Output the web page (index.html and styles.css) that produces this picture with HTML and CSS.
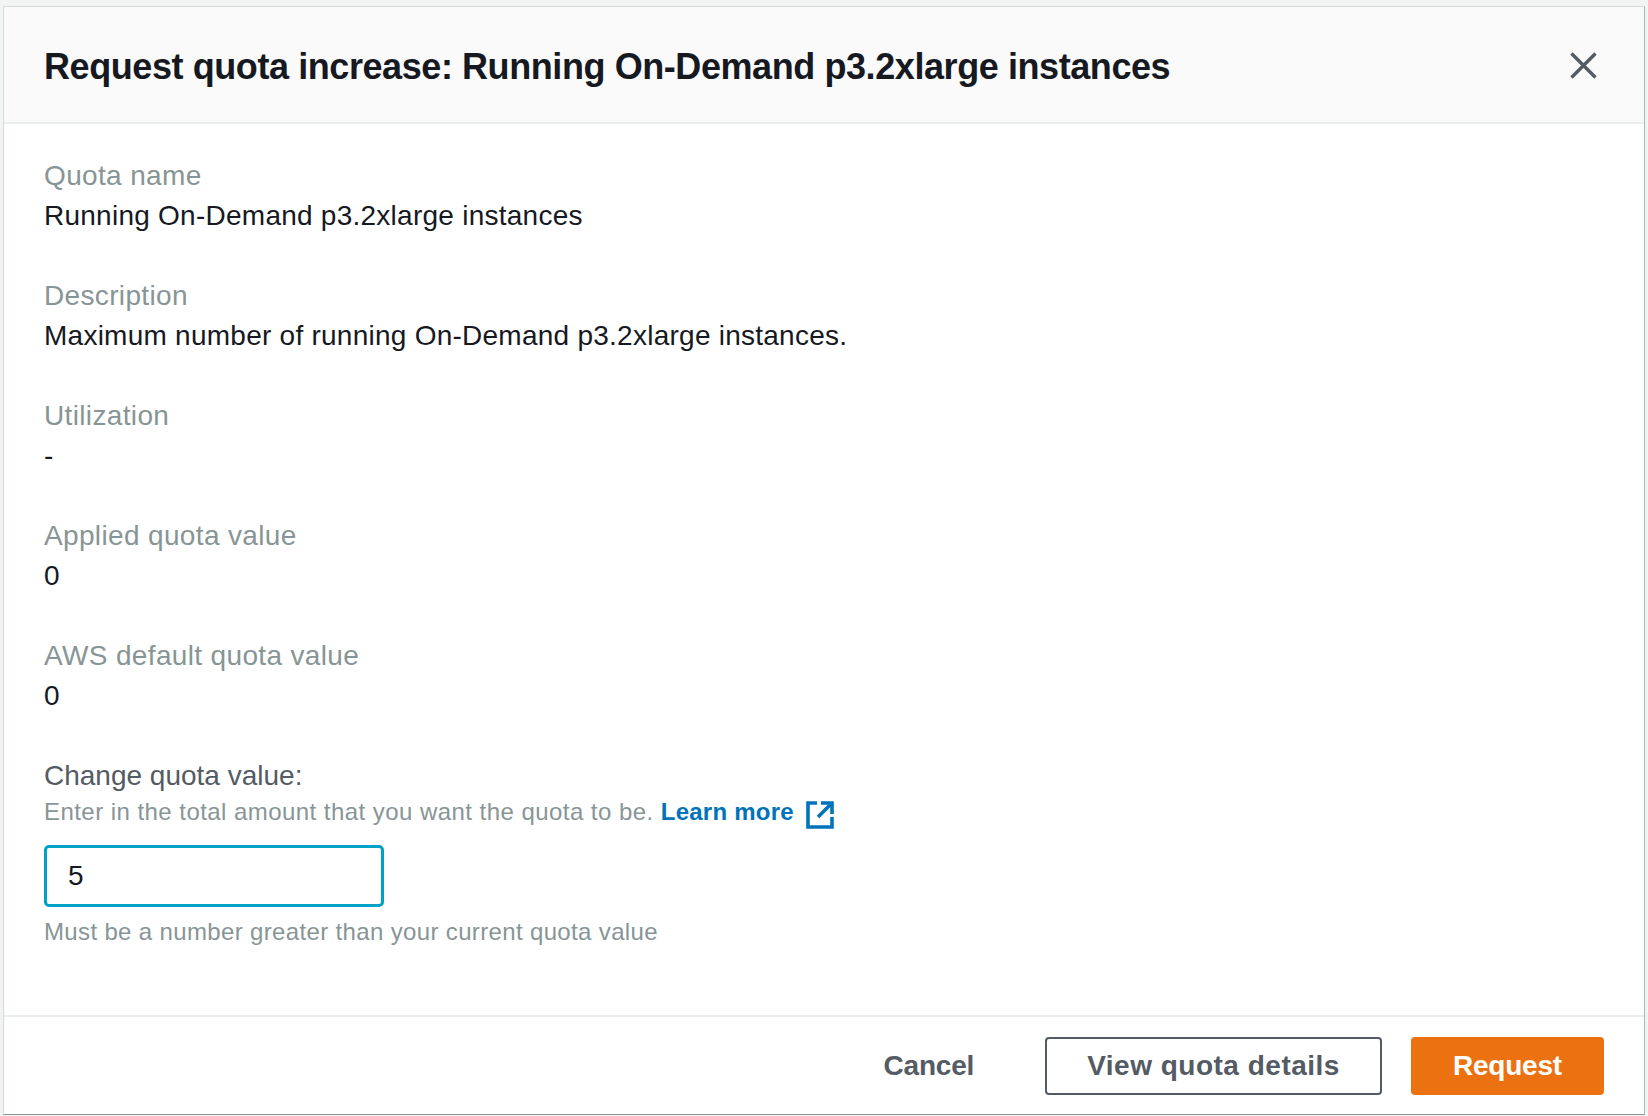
FILE: index.html
```html
<!DOCTYPE html>
<html lang="en">
<head>
<meta charset="utf-8">
<title>Request quota increase</title>
<link rel="stylesheet" href="styles.css">
</head>
<body>
<div class="page">
  <div class="modal">
    <header class="modal-header">
      <h2 class="modal-title">Request quota increase: Running On-Demand p3.2xlarge instances</h2>
      <button class="close-btn" aria-label="Close">
        <svg viewBox="0 0 27 27" width="27" height="27"><path d="M1.5 1.5L25.5 25.5M25.5 1.5L1.5 25.5" stroke="#545b64" stroke-width="3.4" fill="none"/></svg>
      </button>
    </header>
    <div class="modal-body">
      <div class="field">
        <div class="label">Quota name</div>
        <div class="value">Running On-Demand p3.2xlarge instances</div>
      </div>
      <div class="field">
        <div class="label">Description</div>
        <div class="value">Maximum number of running On-Demand p3.2xlarge instances.</div>
      </div>
      <div class="field">
        <div class="label">Utilization</div>
        <div class="value">-</div>
      </div>
      <div class="field">
        <div class="label">Applied quota value</div>
        <div class="value">0</div>
      </div>
      <div class="field">
        <div class="label">AWS default quota value</div>
        <div class="value">0</div>
      </div>
      <div class="form-field">
        <label class="input-label" for="quota">Change quota value:</label>
        <div class="input-desc">Enter in the total amount that you want the quota to be. <a class="link" href="#">Learn more<svg class="ext-icon" viewBox="0 0 28 28" width="28" height="28"><path d="M11 2H2V26H26V16M15 2H26V13M26 2L12 16" stroke="#0073bb" stroke-width="3.6" fill="none"/></svg></a></div>
        <input class="quota-input" id="quota" type="text" value="5">
        <div class="constraint">Must be a number greater than your current quota value</div>
      </div>
    </div>
    <footer class="modal-footer">
      <button class="btn btn-link">Cancel</button>
      <button class="btn btn-normal">View quota details</button>
      <button class="btn btn-primary">Request</button>
    </footer>
  </div>
</div>
</body>
</html>
```

FILE: styles.css
```css
html, body {
  margin: 0;
  padding: 0;
}

body {
  background: #f2f3f3;
  font-family: "Liberation Sans", Arial, sans-serif;
  color: #16191f;
}

.page {
  box-sizing: border-box;
  height: 1116px;
  padding: 6px 3px 1px 3px;
  display: flex;
}

.modal {
  flex: 1;
  display: flex;
  flex-direction: column;
  background: #fff;
  border: 1px solid #d5dbdb;
  border-right-color: #aab7b8;
  border-bottom-color: #879596;
}

.modal-header {
  background: #fafafa;
  border-bottom: 2px solid #eaeded;
  padding: 40px 47px 35px 40px;
  display: flex;
  justify-content: space-between;
  align-items: flex-start;
}

.modal-title {
  margin: 0;
  font-size: 36px;
  line-height: 40px;
  font-weight: 700;
  color: #16191f;
  letter-spacing: -0.42px;
}

.close-btn {
  background: none;
  border: 0;
  padding: 0;
  margin: 5px 0 0 0;
  width: 27px;
  height: 27px;
  display: block;
  cursor: pointer;
}

.close-btn svg {
  display: block;
}

.modal-body {
  flex: 1;
  padding: 32px 40px 0 40px;
}

.field {
  margin-bottom: 40px;
}

.label {
  font-size: 28px;
  line-height: 40px;
  color: #879596;
  letter-spacing: 0.35px;
}

.value {
  font-size: 28px;
  line-height: 40px;
  color: #16191f;
  letter-spacing: 0.25px;
}

.input-label {
  display: block;
  font-size: 28px;
  line-height: 40px;
  color: #545b64;
}

.input-desc {
  font-size: 24px;
  line-height: 32px;
  color: #879596;
  letter-spacing: 0.45px;
}

.link {
  color: #0073bb;
  font-weight: 700;
  text-decoration: none;
  letter-spacing: 0.25px;
}

.ext-icon {
  display: inline-block;
  vertical-align: -9px;
  margin-left: 12px;
}

.quota-input {
  display: block;
  box-sizing: border-box;
  margin-top: 16px;
  width: 340px;
  height: 62px;
  border: 3px solid #00a1c9;
  border-radius: 5px;
  padding: 0 21px;
  font-family: "Liberation Sans", Arial, sans-serif;
  font-size: 28px;
  color: #16191f;
  background: #fff;
  outline: none;
}

.constraint {
  margin-top: 9px;
  font-size: 24px;
  line-height: 32px;
  color: #879596;
  letter-spacing: 0.35px;
}

.modal-footer {
  border-top: 2px solid #eaeded;
  padding: 20px 40px 19px 40px;
  display: flex;
  justify-content: flex-end;
  gap: 29px;
}

.btn {
  box-sizing: border-box;
  height: 58px;
  padding: 0 40px;
  border: 2px solid transparent;
  border-radius: 4px;
  background: none;
  font-family: "Liberation Sans", Arial, sans-serif;
  font-size: 28px;
  font-weight: 700;
  color: #545b64;
  cursor: pointer;
}

.btn-link {
  letter-spacing: -0.2px;
}

.btn-normal {
  background: #fff;
  border-color: #545b64;
  letter-spacing: 0.5px;
}

.btn-primary {
  background: #ec7211;
  border-color: #ec7211;
  color: #fff;
  letter-spacing: -0.2px;
}
```
